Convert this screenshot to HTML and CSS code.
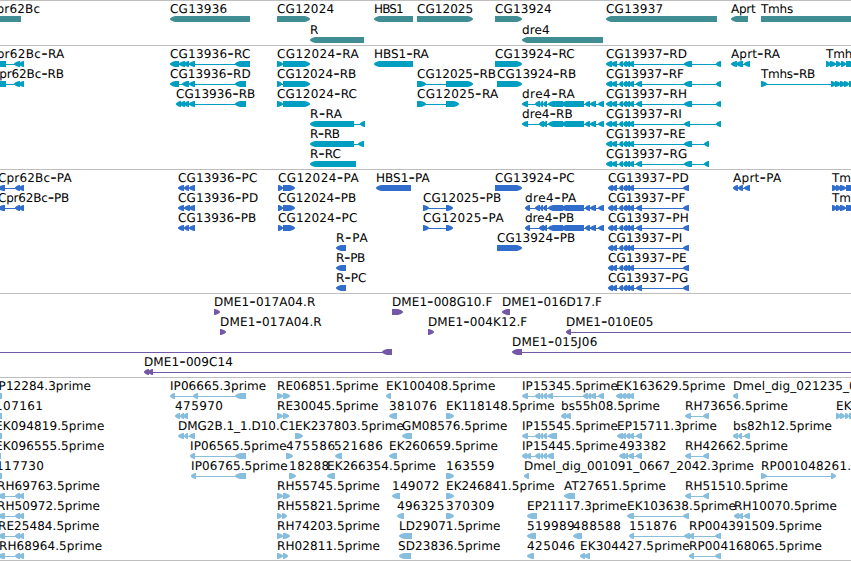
FILE: index.html
```html
<!DOCTYPE html>
<html>
<head>
    <meta charset="utf-8">
    <title>Genome Browser</title>
    <link rel="stylesheet" href="styles.css">
</head>
<body>
    <div class="browser">
        <div class="track genes" id="genes"></div>
        <div class="track transcripts" id="transcripts"></div>
        <div class="track proteins" id="proteins"></div>
        <div class="track clones" id="clones"></div>
        <div class="track ests" id="ests"></div>
    </div>
    <script src="tracks.js"></script>
</body>
</html>
```

FILE: styles.css
```css
body {
    margin: 0;
    background-color: #fff;
    font-family: "DejaVu Sans", sans-serif;
    overflow: hidden;
}

.browser {
    width: 851px;
    border-bottom: 1px solid #bebebe;
}

.track {
    display: flex;
    flex-direction: column;
    border-top: 1px solid #bebebe;
    padding-bottom: 3px;
}

.row {
    display: block;
    width: 851px;
    height: 20px;
    overflow: visible;
}

.row text {
    font-size: 12px;
    fill: #000;
    text-rendering: geometricPrecision;
}

.row .dash {
    font-size: 18px;
    baseline-shift: -1px;
}

.row rect {
    shape-rendering: crispEdges;
}

.genes {
    padding-bottom: 2px;
    fill: #408e94;
}

.genes .row {
    height: 21px;
}

.transcripts {
    fill: #009fc1;
}

.proteins {
    fill: #306dcd;
}

.clones {
    fill: #7458a8;
}

.ests {
    padding-bottom: 2px;
    fill: #88bedd;
}
```

FILE: tracks.js
```js
// feature: [label start, label end, label, strand, [exon start, exon end, ...]]
const tracks = {
    genes: [
        [
            [-12, 39.3, "Cpr62Bc", "+", [-20, 21], true],
            [170, 226.5, "CG13936", "-", [170, 250]],
            [277, 333.5, "CG12024", "+", [277, 310]],
            [374, 403, "HBS1", "-", [374, 413]],
            [417, 472.5, "CG12025", "+", [417, 473]],
            [495, 551, "CG13924", "+", [495, 522]],
            [606, 662.5, "CG13937", "-", [606, 717]],
            [731, 755, "Aprt", "-", [731, 748]],
            [761, 792.5, "Tmhs", "+", [761, 870]]
        ],
        [
            [310, 318, "R", "-", [310, 364]],
            [522, 549, "dre4", "-", [522, 603]]
        ]
    ],
    transcripts: [
        [
            [-12, 63.6, "Cpr62Bc-RA", "-", [-8, 6, 14, 20, 19, 24]],
            [170, 249.6, "CG13936-RC", "-", [170, 179, 179, 185, 184, 189, 189, 195, 235, 250]],
            [277, 358, "CG12024-RA", "+", [277, 283, 283, 310]],
            [374, 428, "HBS1-RA", "-", [374, 413]],
            [495, 574, "CG13924-RC", "+", [495, 522]],
            [606, 686.3, "CG13937-RD", "-", [606, 612, 611, 617, 619, 623, 623, 627, 626, 630, 629, 634, 684, 692, 716, 721]],
            [731, 779.3, "Aprt-RA", "-", [731, 737, 736, 743, 744, 750]],
            [826, 880, "Tmhs-RA", "+", [826, 831, 830, 836, 836, 841, 841, 846, 846, 855]]
        ],
        [
            [-9, 63.3, "Cpr62Bc-RB", "-", [-8, 6, 14, 20, 19, 24]],
            [170, 250, "CG13936-RD", "-", [170, 179, 182, 189, 189, 195, 235, 246]],
            [277, 355.6, "CG12024-RB", "+", [277, 282, 283, 310]],
            [417, 495.3, "CG12025-RB", "+", [417, 426, 446, 473]],
            [497, 575.5, "CG13924-RB", "+", [497, 522]],
            [606, 683.3, "CG13937-RF", "-", [606, 612, 611, 617, 619, 623, 623, 627, 626, 630, 629, 634, 636, 642, 684, 692, 716, 721]],
            [761, 814.6, "Tmhs-RB", "+", [761, 767, 831, 836, 835, 841, 840, 845, 844, 849, 849, 855]]
        ],
        [
            [176, 254.6, "CG13936-RB", "-", [176, 181, 180, 185, 184, 189, 189, 195, 235, 246]],
            [277, 356.3, "CG12024-RC", "+", [277, 283, 283, 310]],
            [417, 497.6, "CG12025-RA", "+", [417, 426, 446, 459]],
            [522, 574, "dre4-RA", "-", [522, 528, 535, 540, 540, 543, 543, 547, 548, 563, 561, 584, 585, 590, 590, 596, 598, 604]],
            [606, 686.3, "CG13937-RH", "-", [606, 612, 611, 617, 619, 623, 623, 627, 626, 630, 629, 634, 636, 642, 684, 692, 716, 721]]
        ],
        [
            [310, 341.3, "R-RA", "-", [310, 354, 360, 365]],
            [522, 572, "dre4-RB", "-", [522, 528, 539, 544, 543, 547, 548, 563, 561, 584, 585, 590, 590, 596, 598, 604]],
            [606, 681, "CG13937-RI", "-", [606, 612, 611, 617, 619, 623, 623, 627, 626, 630, 629, 634, 684, 690, 716, 721]]
        ],
        [
            [310, 339.3, "R-RB", "-", [310, 354, 358, 364]],
            [606, 685, "CG13937-RE", "-", [606, 612, 611, 617, 619, 623, 623, 627, 626, 630, 629, 634, 684, 692, 704, 709]]
        ],
        [
            [310, 340.3, "R-RC", "-", [310, 356]],
            [606, 686.6, "CG13937-RG", "-", [606, 612, 611, 617, 619, 623, 623, 627, 626, 630, 629, 634, 636, 642, 684, 692, 704, 709]]
        ]
    ],
    proteins: [
        [
            [-2, 71, "Cpr62Bc-PA", "-", [-2, 5, 15, 20, 19, 24]],
            [178, 256.6, "CG13936-PC", "-", [178, 184, 184, 189, 189, 195]],
            [278, 358, "CG12024-PA", "+", [278, 283, 283, 295]],
            [376, 429, "HBS1-PA", "-", [376, 411]],
            [495, 574, "CG13924-PC", "+", [495, 522]],
            [608, 688, "CG13937-PD", "-", [608, 613, 612, 617, 619, 623, 623, 627, 626, 630, 629, 634, 683, 689]],
            [733, 780.6, "Aprt-PA", "-", [733, 738, 738, 743, 744, 750]],
            [832, 885, "Tmhs-PA", "+", [832, 837, 836, 841, 840, 846, 846, 855]]
        ],
        [
            [-2, 68.6, "Cpr62Bc-PB", "-", [-2, 5, 15, 20, 19, 24]],
            [178, 257.5, "CG13936-PD", "-", [178, 184, 184, 190, 189, 195]],
            [278, 355.6, "CG12024-PB", "+", [278, 283, 283, 295]],
            [423, 500.6, "CG12025-PB", "+", [423, 429, 446, 453]],
            [525, 575.6, "dre4-PA", "-", [525, 530, 535, 540, 540, 543, 543, 547, 548, 563, 561, 584, 585, 590, 590, 596, 598, 604]],
            [608, 684.6, "CG13937-PF", "-", [608, 613, 612, 617, 619, 623, 623, 627, 626, 630, 629, 634, 636, 642, 683, 689]],
            [832, 885, "Tmhs-PB", "+", [832, 837, 836, 841, 840, 846, 846, 855]]
        ],
        [
            [178, 255.6, "CG13936-PB", "-", [178, 184, 184, 189, 189, 195]],
            [278, 356.6, "CG12024-PC", "+", [278, 283, 283, 295]],
            [423, 503, "CG12025-PA", "+", [423, 429, 446, 453]],
            [525, 573.6, "dre4-PB", "-", [525, 530, 539, 544, 543, 547, 548, 563, 561, 584, 585, 590, 590, 596, 598, 604]],
            [608, 688, "CG13937-PH", "-", [608, 613, 612, 617, 619, 623, 623, 627, 626, 630, 629, 634, 636, 642, 683, 689]]
        ],
        [
            [336, 367, "R-PA", "-", [336, 346]],
            [497, 574.6, "CG13924-PB", "+", [497, 522]],
            [608, 681.6, "CG13937-PI", "-", [608, 613, 612, 617, 619, 623, 623, 627, 626, 630, 629, 634, 683, 689]]
        ],
        [
            [336, 364.6, "R-PB", "-", [336, 346]],
            [608, 686, "CG13937-PE", "-", [608, 613, 612, 617, 619, 623, 623, 627, 626, 630, 629, 634, 683, 689]]
        ],
        [
            [336, 365.6, "R-PC", "-", [336, 346]],
            [608, 687.6, "CG13937-PG", "-", [608, 613, 612, 617, 619, 623, 623, 627, 626, 630, 629, 634, 636, 642, 683, 689]]
        ]
    ],
    clones: [
        [
            [214, 314.6, "DME1-017A04.R", "+", [214, 220]],
            [392, 491.6, "DME1-008G10.F", "+", [392, 403]],
            [502, 601.3, "DME1-016D17.F", "-", [502, 510]]
        ],
        [
            [220, 321, "DME1-017A04.R", "+", [220, 226]],
            [428, 526.5, "DME1-004K12.F", "+", [428, 434]],
            [566, 652.6, "DME1-010E05", "-", [566, 571, 870, 880]]
        ],
        [
            [0, 0, "", "-", [-20, -10, 382, 392]],
            [512, 596.6, "DME1-015J06", "-", [512, 522, 870, 880]]
        ],
        [
            [144, 232.3, "DME1-009C14", "-", [144, 149, 148, 153, 870, 880]]
        ]
    ],
    ests: [
        [
            [-5, 90.3, "IP12284.3prime", "-", [-8, 2]],
            [170, 265.5, "IP06665.3prime", "-", [170, 175, 193, 198, 235, 246]],
            [277, 377.6, "RE06851.5prime", "+", [277, 283, 283, 290]],
            [386, 494.6, "EK100408.5prime", "-", [386, 391]],
            [522, 617.3, "IP15345.5prime", "-", [522, 528, 535, 540, 540, 543, 543, 547, 547, 553, 583, 588, 588, 591, 590, 596, 598, 604]],
            [616, 724.6, "EK163629.5prime", "-", [616, 622, 621, 626, 625, 630, 629, 634]],
            [733, 856, "Dmel_dig_021235_0", "-", [733, 738]]
        ],
        [
            [-5, 42.3, "107161", "-", [-8, 2]],
            [175, 222.3, "475970", "-", [175, 180, 180, 184, 183, 188]],
            [277, 377.6, "RE30045.5prime", "+", [277, 283, 283, 289]],
            [389, 436.3, "381076", "-", [389, 397]],
            [446, 554, "EK118148.5prime", "+", [446, 454]],
            [561, 659.3, "bs55h08.5prime", "-", [561, 566, 565, 571]],
            [685, 787.3, "RH73656.5prime", "-", [685, 691, 703, 709]],
            [836, 851, "EK", "+", [836, 841, 840, 845, 845, 849, 849, 855]]
        ],
        [
            [-5, 103.6, "EK094819.5prime", "-", [-8, 2]],
            [178, 295, "DMG2B.1_1.D10.C1", "-", [178, 184, 184, 188, 189, 195]],
            [295, 403.3, "EK237803.5prime", "+", [295, 303]],
            [402, 506.6, "GM08576.5prime", "-", [402, 412]],
            [522, 617.3, "IP15545.5prime", "-", [522, 528, 535, 540, 540, 543, 543, 547, 548, 557]],
            [617, 716.3, "EP15711.3prime", "-", [617, 623, 622, 626, 626, 630, 629, 634, 636, 642]],
            [733, 831.3, "bs82h12.5prime", "-", [733, 738, 738, 742, 744, 750]]
        ],
        [
            [-5, 103.6, "EK096555.5prime", "-", [-8, 1]],
            [190, 286, "IP06565.5prime", "-", [190, 195, 235, 246]],
            [286, 334.5, "475586", "+", [286, 293]],
            [334, 382.3, "521686", "-", [335, 342]],
            [389, 497.3, "EK260659.5prime", "-", [389, 397]],
            [522, 617.3, "IP15445.5prime", "-", [522, 527, 526, 531, 535, 540, 540, 543, 543, 547, 547, 554]],
            [619, 665.6, "493382", "-", [619, 625, 624, 628, 628, 634, 636, 642]],
            [685, 787.3, "RH42662.5prime", "-", [685, 691, 703, 709]]
        ],
        [
            [-4, 43.3, "117730", "-", [-8, 2]],
            [191, 287, "IP06765.5prime", "-", [191, 196, 235, 246]],
            [289, 328.5, "18288", "+", [289, 296]],
            [327, 435.3, "EK266354.5prime", "-", [327, 335]],
            [446, 493.6, "163559", "+", [446, 454]],
            [524, 753.3, "Dmel_dig_001091_0667_2042.3prime", "-", [524, 529]],
            [761, 894, "RP001048261.5prime", "+", [761, 767, 831, 836]]
        ],
        [
            [-3, 99.3, "RH69763.5prime", "-", [-2, 5, 15, 20, 19, 24]],
            [277, 379.3, "RH55745.5prime", "+", [277, 283, 283, 290]],
            [392, 438.6, "149072", "-", [392, 400]],
            [446, 554, "EK246841.5prime", "+", [446, 454]],
            [564, 665.3, "AT27651.5prime", "-", [564, 575]],
            [685, 787.3, "RH51510.5prime", "-", [685, 691, 703, 709]]
        ],
        [
            [-3, 99.3, "RH50972.5prime", "-", [-2, 5, 15, 20, 19, 24]],
            [277, 379.3, "RH55821.5prime", "+", [277, 282, 282, 287]],
            [397, 443.6, "496325", "-", [397, 404]],
            [446, 493.6, "370309", "+", [446, 454]],
            [527, 626.3, "EP21117.3prime", "-", [527, 537]],
            [627, 735.3, "EK103638.5prime", "-", [627, 634, 683, 689]],
            [734, 836.3, "RH10070.5prime", "-", [734, 739, 738, 743, 744, 750]]
        ],
        [
            [-2, 98.6, "RE25484.5prime", "-", [-2, 5, 15, 20, 19, 24]],
            [277, 379.3, "RH74203.5prime", "+", [277, 283, 283, 290]],
            [399, 499.6, "LD29071.5prime", "-", [399, 412]],
            [527, 574, "519989", "-", [527, 536]],
            [573, 620.3, "488588", "-", [573, 582]],
            [629, 676.3, "151876", "-", [629, 634, 684, 690]],
            [689, 821.3, "RP004391509.5prime", "-", [689, 694, 715, 721]]
        ],
        [
            [-1, 101.5, "RH68964.5prime", "-", [-2, 5, 15, 20, 19, 24]],
            [277, 379.3, "RH02811.5prime", "+", [277, 283, 283, 288]],
            [398, 499.6, "SD23836.5prime", "-", [399, 411]],
            [527, 574.3, "425046", "-", [527, 534]],
            [580, 689, "EK304427.5prime", "-", [580, 585, 584, 590]],
            [689, 821.3, "RP004168065.5prime", "-", [689, 694, 715, 721]]
        ]
    ]
};

const exonTop = 15;
const exonHeight = 6;

function svg(name, attrs) {
    const el = document.createElementNS("http://www.w3.org/2000/svg", name);
    for (const key in attrs) {
        el.setAttribute(key, attrs[key]);
    }
    return el;
}

function exonPoints(start, end, strand) {
    const head = Math.min(5, end - start - 1);
    const dir = strand === "-" ? 1 : -1;
    const tip = strand === "-" ? start : end;
    const tail = strand === "-" ? end : start;
    const mid = tip + dir * head * 0.4;
    const neck = tip + dir * head;
    const bottom = exonTop + exonHeight;
    return [
        [tip, exonTop + 2.4], [mid, exonTop + 1], [neck, exonTop], [tail, exonTop],
        [tail, bottom], [neck, bottom], [mid, bottom - 1], [tip, bottom - 2.4]
    ].join(" ");
}

function drawLabel(row, x, labelEnd, label) {
    const text = svg("text", { x: x, y: 12, textLength: labelEnd - x + 0.7 });
    const parts = label.split("-");
    text.append(parts[0]);
    if (parts.length > 1) {
        const dash = svg("tspan", { class: "dash" });
        dash.textContent = "-";
        text.append(dash, parts[1]);
    }
    row.appendChild(text);
}

function drawFeature(row, feature) {
    const [x, labelEnd, label, strand, exons, openEnd] = feature;

    if (exons.length > 2) {
        row.appendChild(svg("rect", {
            x: exons[0] + 2,
            y: exonTop + 3,
            width: exons[exons.length - 1] - exons[0] - 4,
            height: 1
        }));
    }

    for (let i = 0; i < exons.length; i += 2) {
        if (openEnd) {
            row.appendChild(svg("rect", {
                x: exons[i], y: exonTop, width: exons[i + 1] - exons[i], height: exonHeight
            }));
        } else {
            row.appendChild(svg("polygon", { points: exonPoints(exons[i], exons[i + 1], strand) }));
        }
    }

    if (label) {
        drawLabel(row, x, labelEnd, label);
    }
}

for (const id in tracks) {
    const track = document.getElementById(id);
    tracks[id].forEach(features => {
        const row = svg("svg", { class: "row" });
        features.forEach(feature => drawFeature(row, feature));
        track.appendChild(row);
    });
}
```
